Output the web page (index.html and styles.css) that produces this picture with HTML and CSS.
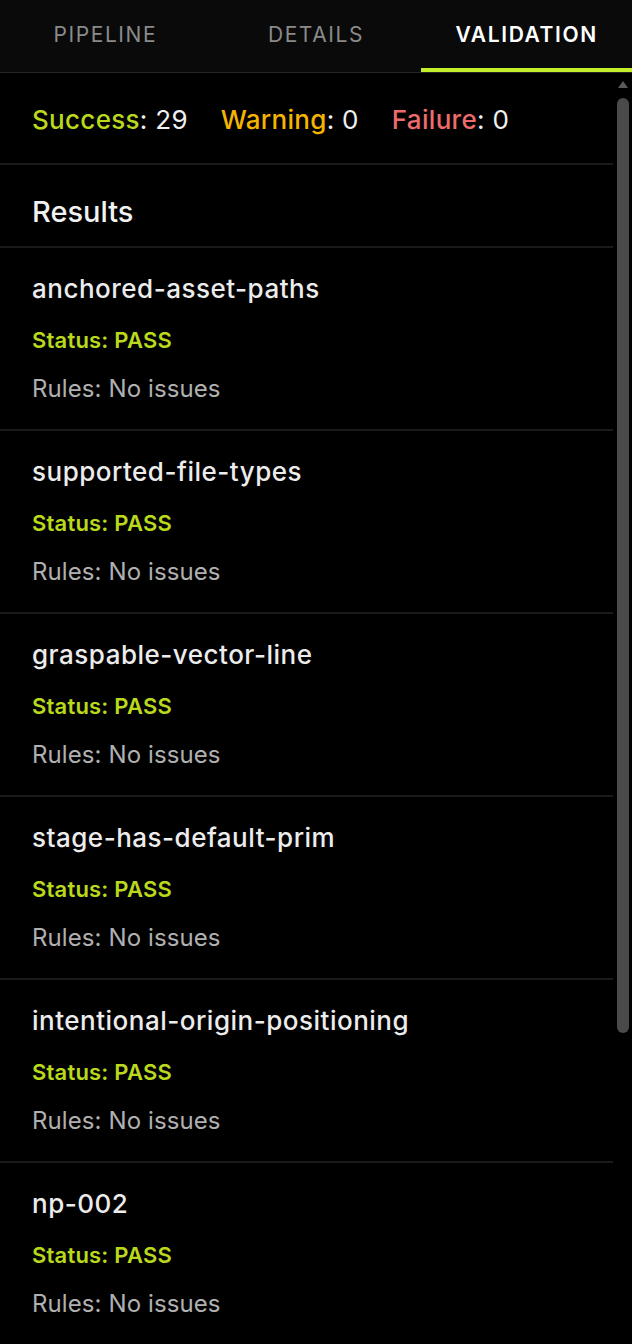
FILE: index.html
```html
<!DOCTYPE html>
<html>
<head>
<meta charset="utf-8">
<link rel="stylesheet" href="styles.css">
</head>
<body>
<div class="panel">
  <nav class="tabs">
    <div class="tab">PIPELINE</div>
    <div class="tab">DETAILS</div>
    <div class="tab active">VALIDATION</div>
  </nav>
  <div class="body">
    <main class="content">
      <section class="summary">
        <span class="stat"><span class="lbl ok">Success</span>: 29</span>
        <span class="stat"><span class="lbl warn">Warning</span>: 0</span>
        <span class="stat"><span class="lbl fail">Failure</span>: 0</span>
      </section>
      <h2 class="results">Results</h2>
      <div class="item">
        <div class="title">anchored-asset-paths</div>
        <div class="status">Status: PASS</div>
        <div class="rules">Rules: No issues</div>
      </div>
      <div class="item">
        <div class="title">supported-file-types</div>
        <div class="status">Status: PASS</div>
        <div class="rules">Rules: No issues</div>
      </div>
      <div class="item">
        <div class="title">graspable-vector-line</div>
        <div class="status">Status: PASS</div>
        <div class="rules">Rules: No issues</div>
      </div>
      <div class="item">
        <div class="title">stage-has-default-prim</div>
        <div class="status">Status: PASS</div>
        <div class="rules">Rules: No issues</div>
      </div>
      <div class="item">
        <div class="title">intentional-origin-positioning</div>
        <div class="status">Status: PASS</div>
        <div class="rules">Rules: No issues</div>
      </div>
      <div class="item">
        <div class="title">np-002</div>
        <div class="status">Status: PASS</div>
        <div class="rules">Rules: No issues</div>
      </div>
    </main>
    <aside class="scrollbar">
      <div class="arrow"></div>
      <div class="thumb"></div>
    </aside>
  </div>
</div>
</body>
</html>
```

FILE: styles.css
```css
html, body {
  margin: 0;
  padding: 0;
  background: #000;
  height: 1344px;
  overflow: hidden;
}
body {
  font-family: Inter, "Liberation Sans", Arial, sans-serif;
  color: #ececec;
}
.panel {
  display: flex;
  flex-direction: column;
  width: 632px;
}
.tabs {
  display: flex;
  background: #0a0a0a;
  border-bottom: 1px solid #262626;
}
.tab {
  flex: 1;
  height: 72px;
  box-sizing: border-box;
  border-bottom: 4px solid transparent;
  display: flex;
  align-items: center;
  justify-content: center;
  font-size: 21px;
  letter-spacing: 1.6px;
  color: #8a8a8a;
  font-weight: 400;
}
.tab.active {
  color: #ffffff;
  font-weight: 600;
  border-bottom-color: #c4ef2b;
}
.body {
  display: flex;
}
.content {
  flex: 1;
  min-width: 0;
}
.summary {
  height: 92px;
  box-sizing: border-box;
  padding: 2px 0 0 32px;
  display: flex;
  align-items: center;
  gap: 33px;
  font-size: 26px;
  letter-spacing: 0.3px;
  border-bottom: 2px solid #1a1a1a;
  color: #f0f0f0;
  font-weight: 400;
}
.lbl { font-weight: 500; }
.ok { color: #bad91c; }
.warn { color: #f4b400; }
.fail { color: #ee6b6b; }
.results {
  margin: 0;
  height: 83px;
  box-sizing: border-box;
  padding: 32px 0 0 32px;
  line-height: 30px;
  font-size: 29px;
  font-weight: 500;
  color: #f2f2f2;
  border-bottom: 2px solid #1a1a1a;
}
.item {
  padding: 26px 0 25px 32px;
  border-bottom: 2px solid #1a1a1a;
  display: flex;
  flex-direction: column;
}
.title {
  line-height: 30px;
  font-size: 26px;
  letter-spacing: 0.5px;
  font-weight: 500;
  color: #ececec;
}
.status {
  margin-top: 21px;
  line-height: 30px;
  font-size: 22px;
  letter-spacing: 0.2px;
  font-weight: 600;
  color: #bad91c;
}
.rules {
  margin-top: 19px;
  line-height: 30px;
  font-size: 24px;
  letter-spacing: 0.1px;
  font-weight: 400;
  color: #b0b0b0;
}
.scrollbar {
  width: 19px;
  display: flex;
  flex-direction: column;
  align-items: center;
  padding-top: 8px;
}
.arrow {
  width: 0;
  height: 0;
  border-left: 5px solid transparent;
  border-right: 5px solid transparent;
  border-bottom: 7px solid #5a5a5a;
}
.thumb {
  margin-top: 10px;
  width: 12px;
  height: 935px;
  border-radius: 6px;
  background: #4a4a4a;
}
```
